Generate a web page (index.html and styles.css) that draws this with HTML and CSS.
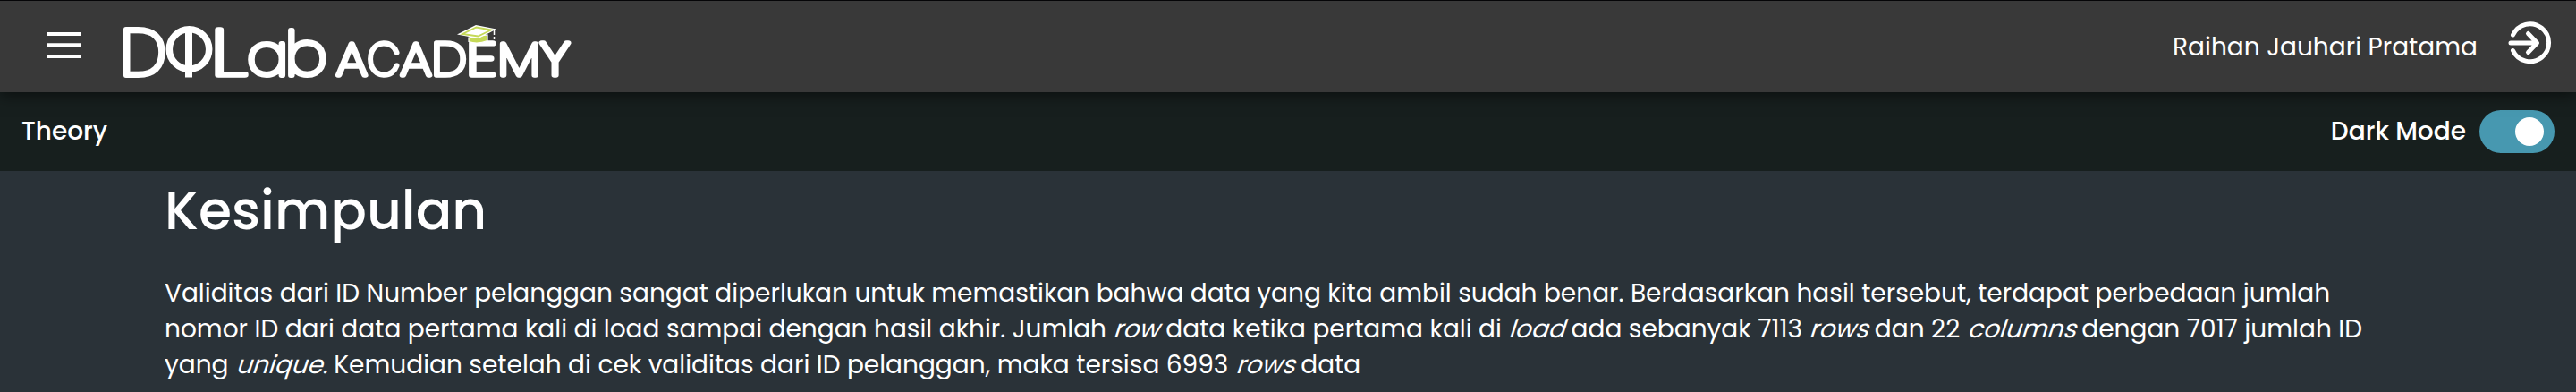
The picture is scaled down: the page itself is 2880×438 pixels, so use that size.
FILE: index.html
```html
<!DOCTYPE html>
<html lang="id">
<head>
<meta charset="utf-8">
<title>DQLab Academy</title>
<link rel="stylesheet" href="styles.css">
</head>
<body>
<header class="topbar">
  <div class="brand">
    <svg class="menu" width="38" height="30" viewBox="0 0 38 30"><path d="M0 2h38M0 14.300h38M0 27h38" stroke="#fff" stroke-width="4"/></svg>
    <svg class="logo" width="504" height="70" viewBox="136 20 504 70">
      <g class="logo-text">
        <text class="lab" transform="translate(134.700 83.600)">D</text>
        <text class="lab lab-l" transform="translate(235.500 83.600) scale(1.400 1)">L</text>
        <text class="lab-a" transform="translate(276.300 84) scale(1.060 1)">a</text>
        <text class="lab-b" transform="translate(319.300 84) scale(1.020 1)">b</text>
        <g class="academy">
          <text transform="translate(376.300 84.300) scale(1.110 1)">A</text>
          <text transform="translate(410.800 84.300) scale(.920 1)">C</text>
          <text transform="translate(448 84.300) scale(1.110 1)">A</text>
          <text transform="translate(483.200 84.300) scale(1.070 1)">D</text>
          <text transform="translate(522 84.300) scale(1.320 1)">E</text>
          <text transform="translate(556.900 84.300) scale(1.150 1)">M</text>
          <text transform="translate(604 84.300) scale(1.250 1)">Y</text>
        </g>
      </g>
      <ellipse cx="211.500" cy="55" rx="22.200" ry="22.200" fill="none" stroke="#fff" stroke-width="7.500"/>
      <path d="M211 34V86.500" stroke="#fff" stroke-width="8"/>
      <path d="M524 42v4.500q10 3.500 21-1v-6.500z" fill="#c5d957" stroke="#fff" stroke-width="1.200"/>
      <path d="M511 38.500L532 28L555 32.500L535 43Z" fill="#fff"/>
      <path d="M517 38L532.500 30.500L549 33.500L534.500 40.500Z" fill="none" stroke="#c5d957" stroke-width="1.800"/>
      <path d="M552.500 33v6M552.500 41v3" stroke="#fff" stroke-width="1.500"/>
    </svg>
  </div>
  <div class="user">
    <span class="name">Raihan Jauhari Pratama</span>
    <svg class="exit" width="48" height="50" viewBox="0 0 48 50" fill="none" stroke="#fff" stroke-width="5" stroke-linecap="round" stroke-linejoin="round"><path d="M4.500 16A21 21 0 1 1 4.500 33.500M2 25H31M21.500 14.500L31.500 25L21.500 35.500"/></svg>
  </div>
</header>
<div class="subbar">
  <span class="section">Theory</span>
  <div class="mode"><span class="mode-label">Dark Mode</span><span class="switch"><span class="knob"></span></span></div>
</div>
<main class="content">
  <h1 class="title">Kesimpulan</h1>
  <p class="text">
    <span class="line">Validitas dari ID Number pelanggan sangat diperlukan untuk memastikan bahwa data yang kita ambil sudah benar. Berdasarkan hasil tersebut, terdapat perbedaan jumlah</span>
    <span class="line">nomor ID dari data pertama kali di load sampai dengan hasil akhir. Jumlah <em>row</em> data ketika pertama kali di <em>load</em> ada sebanyak 7113 <em>rows</em> dan 22 <em>columns</em> dengan 7017 jumlah ID</span>
    <span class="line">yang <em>unique.</em> Kemudian setelah di cek validitas dari ID pelanggan, maka tersisa 6993 <em>rows</em> data</span>
  </p>
</main>
</body>
</html>
```
FILE: styles.css
```css
* { box-sizing: border-box; }
body {
  margin: 0;
  height: 438px;
  overflow: hidden;
  background: #2a3238;
  color: #fff;
  font-family: Poppins, Inter, sans-serif;
  font-size: 28px;
}
.topbar {
  position: relative;
  height: 103px;
  display: flex;
  justify-content: space-between;
  background: #393939;
  border-top: 1px solid #050507;
  box-shadow: 0 4px 16px rgba(0, 0, 0, .5);
}
.brand { display: flex; align-items: flex-start; padding-left: 52px; gap: 46px; }
.menu { margin-top: 35px; }
.logo { margin-top: 19px; overflow: visible; }
.logo-text { fill: #fff; stroke: #fff; stroke-linejoin: round; font-family: Poppins, Lato, sans-serif; font-weight: 200; }
.lab { font-size: 73px; stroke-width: 6px; }
.lab-l { font-weight: 100; stroke-width: 5.5px; }
.lab-a { font-size: 64px; stroke-width: 5.8px; }
.lab-b { font-size: 68px; stroke-width: 6px; }
.academy { font-size: 51px; stroke-width: 5.4px; }
.user { display: flex; align-items: flex-start; gap: 35px; padding-right: 27px; }
.name { margin-top: 32px; line-height: 40px; }
.exit { margin-top: 22px; overflow: visible; }
.subbar {
  height: 88px;
  display: flex;
  align-items: center;
  justify-content: space-between;
  padding: 0 24px;
  background: #171f1e;
  font-weight: 500;
}
.mode { display: flex; align-items: center; gap: 15px; }
.switch {
  width: 84px;
  height: 48px;
  padding: 8px 12px;
  display: flex;
  justify-content: flex-end;
  border-radius: 24px;
  background: #4798b0;
}
.knob { width: 32px; height: 32px; border-radius: 50%; background: #fff; }
.content { padding: 8px 184px 0; }
.title { margin: 0; font-size: 60px; font-weight: 500; line-height: 72px; }
.text { margin: 37px 0 0; line-height: 40px; }
.line { display: table; white-space: nowrap; }
.line em { display: inline-block; font-style: normal; transform: skewX(-18deg); transform-origin: 0 74%; }
```
